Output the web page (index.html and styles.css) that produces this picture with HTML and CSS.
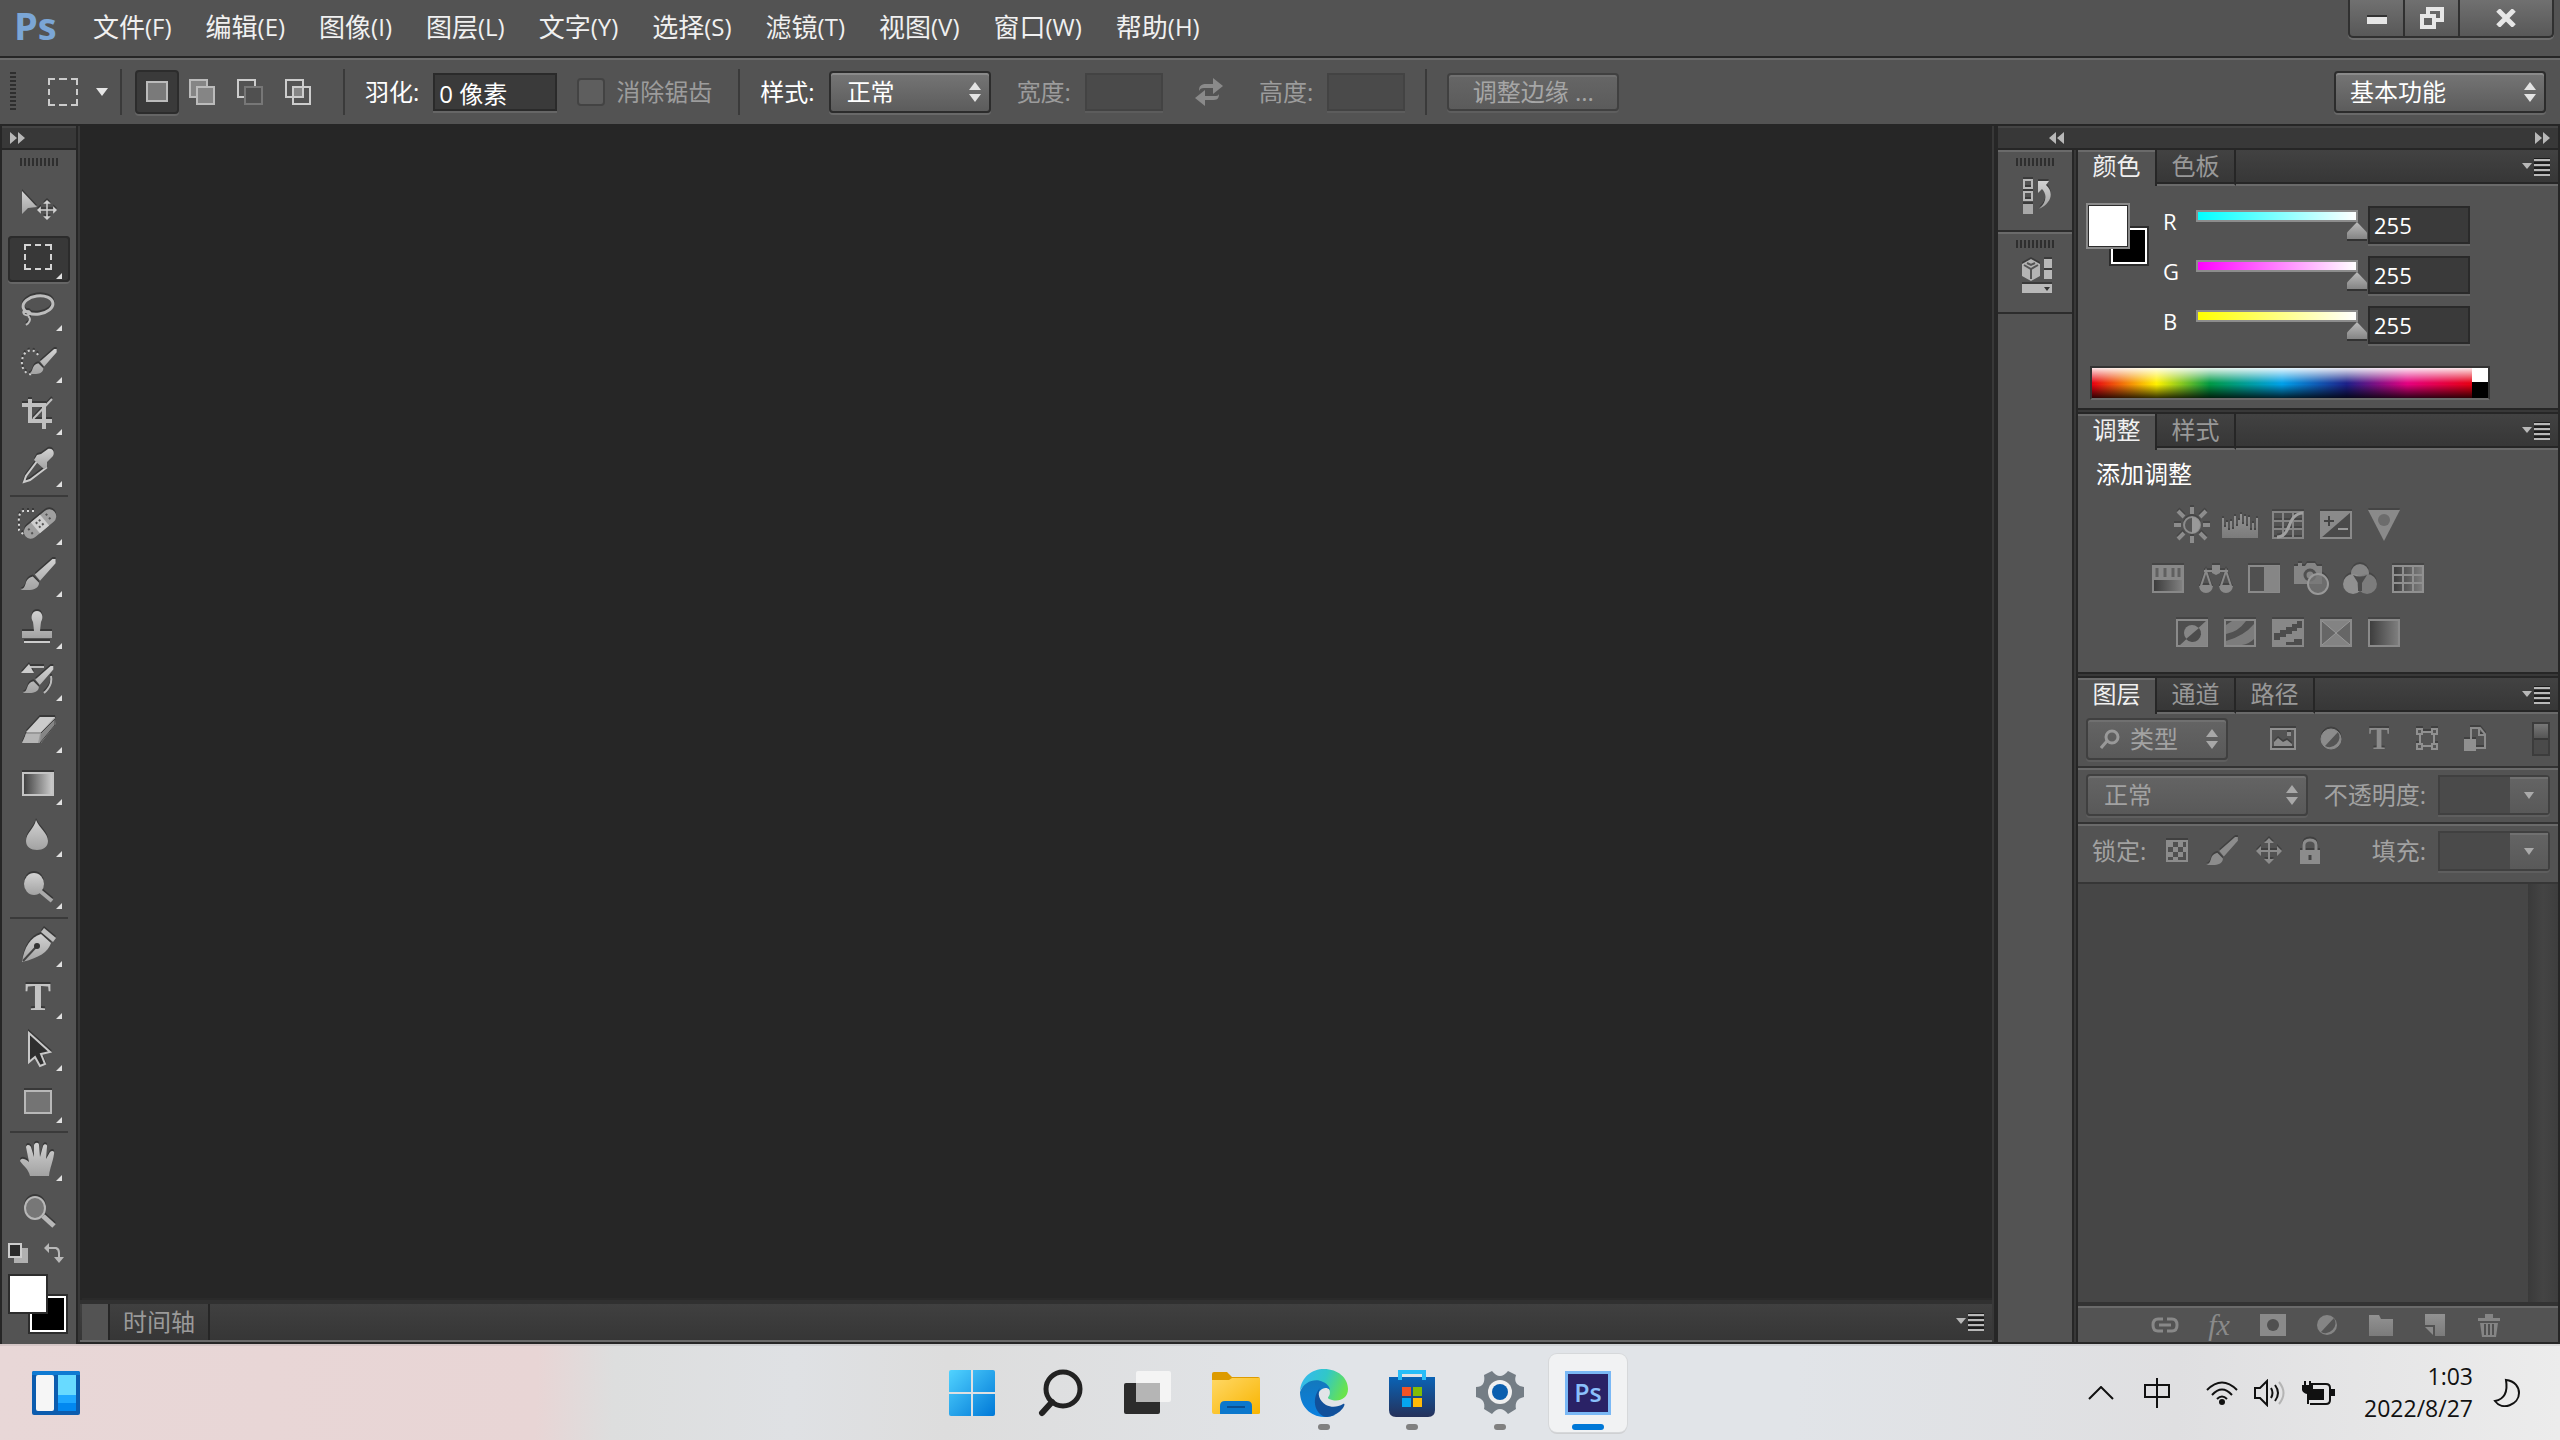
FILE: index.html
```html
<!DOCTYPE html>
<html lang="zh-CN">
<head>
    <meta charset="utf-8">
    <title>Photoshop</title>
    <link rel="stylesheet" href="styles.css">
</head>
<body>
<svg class="defs" width="0" height="0">
    <defs>
        <linearGradient id="metal" x1="0" y1="0" x2="0" y2="1"><stop offset="0" stop-color="#d2d2d2"/><stop offset="1" stop-color="#a2a2a2"/></linearGradient>
        <linearGradient id="dim" x1="0" y1="0" x2="0" y2="1"><stop offset="0" stop-color="#929292"/><stop offset="1" stop-color="#7b7b7b"/></linearGradient>
        <linearGradient id="ramp"><stop offset="0" stop-color="#3c3c3c"/><stop offset="1" stop-color="#cfcfcf"/></linearGradient>
        <linearGradient id="dimramp"><stop offset="0" stop-color="#3c3c3c"/><stop offset="1" stop-color="#808080"/></linearGradient>
        <symbol id="updown" viewBox="0 0 12 20"><path d="M6 0l6 8H0zM6 20l6-8H0z" fill="currentColor"/></symbol>
        <symbol id="panelmenu" viewBox="0 0 28 18"><path d="M0 5h10l-5 6z" fill="#b8b8b8"/><path d="M12 2h16M12 7h16M12 12h16M12 17h16" stroke="#b8b8b8" stroke-width="2"/><path d="M12 0h16M12 5h16M12 10h16M12 15h16" stroke="#1c1c1c" stroke-width="2"/></symbol>
        <symbol id="brushshape" viewBox="0 0 34 30"><path d="M34 0h-3L14 15l5 6L34 4zM12 17l6 6c0 6-7 8-18 7 3-1 4-3 5-6 1-4 3-6 7-7z"/></symbol>
        <symbol id="crossarrows" viewBox="0 0 26 26"><path d="M13 0l5 5h-4v7h7V8l5 5-5 5v-4h-7v7h4l-5 5-5-5h4v-7H5v4l-5-5 5-5v4h7V5H8z"/></symbol>
    </defs>
</svg>

<header class="menubar">
    <span class="logo">Ps</span>
    <nav class="menus">
        <button>文件<small>(F)</small></button>
        <button>编辑<small>(E)</small></button>
        <button>图像<small>(I)</small></button>
        <button>图层<small>(L)</small></button>
        <button>文字<small>(Y)</small></button>
        <button>选择<small>(S)</small></button>
        <button>滤镜<small>(T)</small></button>
        <button>视图<small>(V)</small></button>
        <button>窗口<small>(W)</small></button>
        <button>帮助<small>(H)</small></button>
    </nav>
    <div class="window-buttons">
        <button aria-label="最小化"><svg width="20" height="20"><path d="M0 9h20v7H0z" fill="#e6e6e6"/><path d="M0 8h20" stroke="#333" stroke-width="2"/></svg></button>
        <button aria-label="还原"><svg width="24" height="22" fill="none" stroke="#e6e6e6" stroke-width="4"><path d="M8 8V2h14v11h-6"/><path d="M2 9h12v11H2z"/></svg></button>
        <button class="close" aria-label="关闭"><svg width="20" height="18" fill="none" stroke="#e6e6e6" stroke-width="5"><path d="M2 1l16 16M18 1L2 17"/></svg></button>
    </div>
</header>

<div class="options">
    <i class="grip-v"></i>
    <button class="preset" aria-label="矩形选框工具">
        <svg width="30" height="28" fill="none" stroke="#ccc" stroke-width="2"><path d="M1 7V1h6M23 1h6v6M29 21v6h-6M7 27H1v-6M11 1h8M11 27h8M1 11v6M29 11v6"/></svg>
        <svg width="12" height="8"><path d="M0 0h12L6 8z" fill="#e6e6e6"/></svg>
    </button>
    <i class="sep tight"></i>
    <div class="modes">
        <button class="on" aria-label="新选区"><svg width="22" height="24"><rect x="1" y="2" width="20" height="19" fill="#7a7a7a" stroke="#bbb" stroke-width="2"/></svg></button>
        <button aria-label="添加到选区"><svg width="28" height="28" fill="#858585" stroke="#bbb" stroke-width="2"><path d="M1 2h17v17H1z"/><path d="M8 9h17v17H8z"/></svg></button>
        <button aria-label="从选区减去"><svg width="28" height="28" fill="none" stroke-width="2"><path d="M8 19H1V2h17v6" stroke="#ccc"/><path d="M8 9h17v17H8z" fill="#505050" stroke="#777"/></svg></button>
        <button aria-label="与选区交叉"><svg width="28" height="28" fill="none" stroke="#ccc" stroke-width="2"><path d="M1 2h17v17H1z"/><path d="M8 9h17v17H8z"/><path d="M9 10h8v8H9z" fill="#858585" stroke="none"/></svg></button>
    </div>
    <i class="sep"></i>
    <label class="field">羽化: <input class="box feather" type="text" value="0 像素"></label>
    <label class="check off"><input type="checkbox" disabled>消除锯齿</label>
    <i class="sep"></i>
    <label class="field">样式:
        <span class="select style-select"><select><option>正常</option></select><svg width="12" height="20"><use href="#updown"/></svg></span>
    </label>
    <label class="field off width-field">宽度: <input class="box" type="text" disabled></label>
    <button class="swap" aria-label="高度和宽度互换"><svg width="28" height="28" fill="#8a8a8a"><path d="M4 13c0-5 2-7 7-7h7V0l10 8-10 8v-6H9c-3 0-4 1-5 3zM24 16c0 5-2 6-7 6h-7v6L0 20l10-8v6h9c3 0 4 0 5-2z"/></svg></button>
    <label class="field off">高度: <input class="box" type="text" disabled></label>
    <i class="sep"></i>
    <button class="refine" disabled>调整边缘 ...</button>
    <span class="select workspace-select"><select aria-label="工作区"><option>基本功能</option></select><svg width="12" height="20"><use href="#updown"/></svg></span>
</div>

<main class="workspace">
    <aside class="toolbox">
        <button class="collapse" aria-label="展开"><svg width="16" height="12" fill="#b8b8b8"><path d="M0 0l7 6-7 6zM8 0l7 6-7 6z"/></svg></button>
        <i class="grip-h"></i>
        <div class="tools">
            <button class="solo" aria-label="移动"><svg viewBox="0 0 62 46"><path d="M14 7v23l6-6 9-1z" fill="url(#metal)"/><use href="#crossarrows" x="29" y="16" width="20" height="20" fill="#d0d0d0"/></svg></button>
            <button class="on" aria-label="矩形选框"><svg viewBox="0 0 62 46" fill="none" stroke="#d4d4d4" stroke-width="2"><path d="M17 14V9h6M37 9h6v5M43 28v5h-6M23 33h-6v-5M27 9h6M27 33h6M17 18v6M43 18v6"/></svg></button>
            <button aria-label="套索"><svg viewBox="0 0 62 46" fill="none" stroke="#bdbdbd" stroke-width="3"><ellipse cx="30" cy="17" rx="15" ry="9" transform="rotate(-8 30 17)"/><path d="M16 22c-3 5 5 7 6 3 0-3-5-2-5 0M20 28c4 3 1 7-2 9" stroke-width="2"/></svg></button>
            <button aria-label="快速选择"><svg viewBox="0 0 62 46"><path d="M30 15a9 12 0 1 0-5 19" fill="none" stroke="#d0d0d0" stroke-width="2" stroke-dasharray="2 3"/><use href="#brushshape" x="19" y="9" width="31" height="25" fill="url(#metal)"/></svg></button>
            <button aria-label="裁剪"><svg viewBox="0 0 62 46" fill="none" stroke="#c0c0c0" stroke-width="4"><path d="M14 13h22v24M22 7v22h22"/><path d="M25 27L44 7" stroke-width="2"/></svg></button>
            <button aria-label="吸管"><svg viewBox="0 0 62 46"><path d="M30 16l8 8-16 12-6 2 2-6z" fill="none" stroke="#ccc" stroke-width="2"/><path d="M29 11l4-1 7-5c5-1 7 3 5 7l-6 6v5l-3 2-10-9z" fill="url(#metal)"/></svg></button>
            <hr>
            <button aria-label="污点修复画笔"><svg viewBox="0 0 62 46"><path d="M26 9H15q-5 3-4 10v9l4 4" fill="none" stroke="#d8d8d8" stroke-width="2" stroke-dasharray="2 3"/><g transform="rotate(-40 32 22)"><rect x="13" y="15" width="38" height="14" rx="7" fill="#a0a0a0"/><path d="M26 15h12v14H26z" fill="#cfcfcf"/><path d="M29 19h6M29 24h6M19 19h3M19 24h3M42 19h3M42 24h3" stroke="#555" stroke-width="2" stroke-dasharray="2 2"/></g></svg></button>
            <button aria-label="画笔"><svg viewBox="0 0 62 46"><use href="#brushshape" x="12" y="5" width="36" height="31" fill="url(#metal)"/></svg></button>
            <button aria-label="仿制图章"><svg viewBox="0 0 62 46"><path d="M25 16c-3-5-1-11 4-11s7 6 4 11l-1 9h12v7H14v-7h12z" fill="url(#metal)"/><path d="M16 36h26" stroke="#ccc" stroke-width="2"/></svg></button>
            <button aria-label="历史记录画笔"><svg viewBox="0 0 62 46"><path d="M22 9h14M43 18q2 9-7 17" fill="none" stroke="#bbb" stroke-width="2" stroke-dasharray="14 0"/><path d="M13 15l8-9 5 9z" fill="#ccc"/><use href="#brushshape" x="14" y="8" width="32" height="27" fill="url(#metal)"/></svg></button>
            <button aria-label="橡皮擦"><svg viewBox="0 0 62 46"><path d="M15 33l3-10L32 7h15l1 7-15 19z" fill="#999"/><path d="M32 7h15L33 22H18z" fill="#cbcbcb"/><path d="M18 24h14l-2 9H14z" fill="#b5b5b5"/><path d="M33 23l14-14v6L32 33" fill="#858585" stroke="#444"/></svg></button>
            <button aria-label="渐变"><svg viewBox="0 0 62 46"><rect x="15" y="11" width="30" height="22" fill="url(#ramp)" stroke="#c4c4c4" stroke-width="2"/></svg></button>
            <button aria-label="模糊"><svg viewBox="0 0 62 46"><path d="M28 6c3 8 12 13 12 21 0 6-5 9-11 9s-11-3-11-9c0-8 8-12 10-21z" fill="url(#metal)"/></svg></button>
            <button aria-label="减淡"><svg viewBox="0 0 62 46"><ellipse cx="26" cy="18" rx="10" ry="11" fill="url(#metal)"/><path d="M32 25l12 10" stroke="#aaa" stroke-width="4"/></svg></button>
            <hr>
            <button aria-label="钢笔"><svg viewBox="0 0 62 46"><path d="M33 10l10 9c-3 9-12 15-29 19 2-15 9-25 19-28z" fill="url(#metal)"/><path d="M36 4l12 10-3 4L33 8z" fill="#bdbdbd"/><path d="M15 37l13-14" stroke="#444" stroke-width="2"/><circle cx="29" cy="22" r="3" fill="#333"/></svg></button>
            <button aria-label="横排文字"><svg viewBox="0 0 62 46"><text x="30" y="34" class="glyph" fill="#c4c4c4">T</text></svg></button>
            <button aria-label="路径选择"><svg viewBox="0 0 62 46"><path d="M21 5v29l6-5 5 9 5-2-4-10 9-2z" fill="#2e2e2e" stroke="#c8c8c8" stroke-width="2"/></svg></button>
            <button aria-label="矩形"><svg viewBox="0 0 62 46"><rect x="17" y="11" width="26" height="22" fill="#747474" stroke="#b8b8b8" stroke-width="2"/></svg></button>
            <hr>
            <button aria-label="抓手"><svg viewBox="0 0 62 46"><path d="M22 38c-2-8-6-9-10-15 1-3 4-3 9 1L18 9c1-3 4-2 5 0l3 10V7c1-3 5-3 5 0l1 12 3-11c1-3 5-2 4 1l-1 12 4-7c2-2 5-1 4 2-1 8-4 13-5 22z" fill="url(#metal)"/></svg></button>
            <button class="solo" aria-label="缩放"><svg viewBox="0 0 62 46"><ellipse cx="27" cy="18" rx="10" ry="11" fill="#777" stroke="#b8b8b8" stroke-width="2"/><path d="M35 26l11 10" stroke="#b8b8b8" stroke-width="5"/></svg></button>
        </div>
        <div class="mini">
            <button aria-label="默认颜色"><svg width="20" height="22"><path d="M6 6h14v15H6z" fill="#b0b0b0"/><path d="M1 2h12v13H1z" fill="#2b2b2b" stroke="#ccc" stroke-width="2"/></svg></button>
            <button aria-label="切换颜色"><svg width="20" height="22" fill="none" stroke="#b8b8b8" stroke-width="2"><path d="M4 6h8q3 1 3 5v7"/><path d="M5 1v10L0 6zM10 15h10l-5 6z" fill="#b8b8b8" stroke="none"/></svg></button>
        </div>
        <div class="swatches"><b class="bg"></b><b class="fg"></b></div>
    </aside>

    <section class="center">
        <div class="canvas"></div>
        <div class="timeline">
            <i class="stub"></i>
            <button class="tl-tab">时间轴</button>
            <button class="menu-btn" aria-label="面板菜单"><svg width="28" height="18"><use href="#panelmenu"/></svg></button>
        </div>
    </section>

    <aside class="dock">
        <div class="dock-head">
            <button aria-label="展开"><svg width="16" height="12" fill="#b8b8b8"><path d="M7 0v12L0 6zM15 0v12L8 6z"/></svg></button>
            <button aria-label="折叠"><svg width="16" height="12" fill="#b8b8b8"><path d="M0 0l7 6-7 6zM8 0l7 6-7 6z"/></svg></button>
        </div>
        <div class="dock-body">
            <div class="strip">
                <div class="strip-cell"><i class="grip-h"></i><button aria-label="历史记录"><svg width="30" height="36"><path d="M2 2h8v8H2zM2 14h8v8H2z" fill="none" stroke="#b8b8b8" stroke-width="2"/><path d="M1 26h10v10H1z" fill="#a8a8a8"/><path d="M16 3h11l-3 4c8 7 6 18-7 24 8-7 8-15 3-20l-4 4z" fill="url(#metal)"/></svg></button></div>
                <div class="strip-cell"><i class="grip-h"></i><button aria-label="属性"><svg width="30" height="36" viewBox="0 3 30 36" overflow="visible"><path d="M9 2l9 5v12l-9 5-9-5V7z" fill="#b4b4b4"/><path d="M2 8l7 4 7-4M9 12v10M5 6l4 2 4-2" fill="none" stroke="#555" stroke-width="2"/><path d="M22 2h8v9h-8zM22 13h8v9h-8zM0 27h30v9H0z" fill="#b8b8b8"/><path d="M22 30h6l-3 4z" fill="#333"/></svg></button></div>
            </div>
            <div class="panels">
                <section class="panel">
                    <div class="tabs"><button class="on">颜色</button><button>色板</button><span class="fill"><svg width="28" height="18"><use href="#panelmenu"/></svg></span></div>
                    <div class="color-body">
                        <div class="color-swatches"><b class="bg"></b><b class="fg"></b></div>
                        <div class="channels">
                            <label for="r">R</label><input class="slider cyan" type="range" min="0" max="255" value="255" aria-label="R"><input class="box" id="r" type="text" value="255">
                            <label for="g">G</label><input class="slider magenta" type="range" min="0" max="255" value="255" aria-label="G"><input class="box" id="g" type="text" value="255">
                            <label for="b">B</label><input class="slider yellow" type="range" min="0" max="255" value="255" aria-label="B"><input class="box" id="b" type="text" value="255">
                        </div>
                    </div>
                    <div class="spectrum"><i></i><b></b></div>
                </section>

                <section class="panel">
                    <div class="tabs"><button class="on">调整</button><button>样式</button><span class="fill"><svg width="28" height="18"><use href="#panelmenu"/></svg></span></div>
                    <h3 class="hint">添加调整</h3>
                    <div class="adjust">
                        <div>
                            <button aria-label="亮度/对比度"><svg width="36" height="36"><path d="M18 0v7M18 29v7M0 18h7M29 18h7M4 4l6 6M26 26l6 6M32 4l-6 6M10 26l-6 6" stroke="#8c8c8c" stroke-width="4"/><circle cx="18" cy="18" r="8" fill="#555" stroke="#8c8c8c" stroke-width="2"/><path d="M18 10a8 8 0 0 1 0 16z" fill="#999"/></svg></button>
                            <button aria-label="色阶"><svg width="36" height="26"><path d="M0 26V6h2v9h2v-5h2v8h2V9h2v8h2V4h2v10h2V8h2V2h2v10h2V4h2v10h2V5h2v13h2v-7h2v7h2V6h2v20z" fill="url(#dim)"/></svg></button>
                            <button aria-label="曲线"><svg width="32" height="28" fill="none" stroke="#858585" stroke-width="2"><path d="M1 1h30v26H1zM11 1v26M21 1v26M1 10h30M1 18h30"/><path d="M5 26C20 26 14 3 31 2" stroke="#a0a0a0" stroke-width="3"/></svg></button>
                            <button aria-label="曝光度"><svg width="32" height="28"><path d="M1 1h30v26H1z" fill="#4a4a4a" stroke="#8a8a8a" stroke-width="2"/><path d="M1 27V1h30z" fill="#8a8a8a"/><path d="M4 10h10M9 5v10" stroke="#444" stroke-width="2"/><path d="M18 18h10" stroke="#999" stroke-width="2"/></svg></button>
                            <button aria-label="自然饱和度"><svg width="32" height="32"><path d="M0 1h32L16 32z" fill="#8a8a8a"/><circle cx="16" cy="11" r="6" fill="#6c6c6c"/></svg></button>
                        </div>
                        <div>
                            <button aria-label="色相/饱和度"><svg width="32" height="28"><path d="M0 0h32v28H0z" fill="#888"/><path d="M5 3v9M13 3v9M21 3v9M27 3v9" stroke="#606060" stroke-width="3"/><path d="M2 15h28v11H2z" fill="url(#dimramp)"/></svg></button>
                            <button aria-label="色彩平衡"><svg width="34" height="30" fill="none" stroke="#8a8a8a" stroke-width="2"><path d="M5 7h24M7 7L2 22h10zM27 7l-5 15h10z"/><path d="M13 1h8v8l-4 2-4-2zM0 22h14q-1 7-7 7t-7-7zM20 22h14q-1 7-7 7t-7-7z" fill="#8a8a8a" stroke="none"/></svg></button>
                            <button aria-label="黑白"><svg width="32" height="28"><path d="M1 1h30v26H1z" fill="#505050" stroke="#8a8a8a" stroke-width="2"/><path d="M16 1h15v26H16z" fill="#868686"/></svg></button>
                            <button aria-label="照片滤镜"><svg width="36" height="32"><path d="M0 3h4V0h4v3h3l2-3h8l2 3h5v18H0z" fill="#858585"/><circle cx="16" cy="12" r="5" fill="none" stroke="#505050" stroke-width="3"/><circle cx="24" cy="21" r="10" fill="#777" fill-opacity=".8" stroke="#999" stroke-width="2"/></svg></button>
                            <button aria-label="通道混合器"><svg width="34" height="32"><circle cx="17" cy="10" r="9" fill="#858585"/><circle cx="10" cy="21" r="10" fill="#909090"/><circle cx="24" cy="21" r="10" fill="#7c7c7c"/><path d="M10 12q7 3 14 0l-5 8v8h-4v-8z" fill="#4c4c4c"/></svg></button>
                            <button aria-label="颜色查找"><svg width="32" height="28"><path d="M1 1h30v26H1z" fill="url(#dimramp)"/><path d="M1 1h30v26H1zM11 1v26M21 1v26M1 10h30M1 18h30" fill="none" stroke="#909090" stroke-width="2"/></svg></button>
                        </div>
                        <div>
                            <button aria-label="反相"><svg width="32" height="28"><path d="M1 1h30v26H1z" fill="#4e4e4e" stroke="#8a8a8a" stroke-width="2"/><path d="M31 1v26H3z" fill="#868686"/><circle cx="16" cy="14" r="8" fill="#868686"/><path d="M23 9a8 8 0 0 1-13 11z" fill="#4c4c4c"/></svg></button>
                            <button aria-label="色调分离"><svg width="32" height="28"><path d="M1 1h30v26H1z" fill="#7c7c7c" stroke="#8a8a8a" stroke-width="2"/><path d="M2 15Q14 13 22 2h8v3Q20 17 2 22zM18 26q7-1 12-6v6zM2 2h6L2 6z" fill="#515151"/></svg></button>
                            <button aria-label="阈值"><svg width="32" height="28"><path d="M0 0h32v28H0z" fill="#888"/><path d="M2 14h6v-3h6V8h6V5h5V2h5v7h-5v3h-5v3h-6v3H8v3H2zM14 26v-3h8v-3h8v6z" fill="#4c4c4c"/></svg></button>
                            <button aria-label="可选颜色"><svg width="32" height="28"><path d="M1 1h30v26H1z" fill="#666" stroke="#8a8a8a" stroke-width="2"/><path d="M2 2h28L16 14zM2 26h28L16 14z" fill="#838383"/><path d="M2 2l28 24M30 2L2 26" stroke="#999"/></svg></button>
                            <button aria-label="渐变映射"><svg width="32" height="28"><path d="M1 1h30v26H1z" fill="url(#dimramp)" stroke="#8a8a8a" stroke-width="2"/></svg></button>
                        </div>
                    </div>
                </section>

                <section class="panel layers">
                    <div class="tabs"><button class="on">图层</button><button>通道</button><button>路径</button><span class="fill"><svg width="28" height="18"><use href="#panelmenu"/></svg></span></div>
                    <div class="row">
                        <span class="select dimmed kind"><svg class="lens" width="20" height="20" fill="none" stroke="#999" stroke-width="3"><circle cx="12" cy="8" r="6"/><path d="M7 12l-6 7"/></svg><select aria-label="类型" disabled><option>类型</option></select><svg width="12" height="20"><use href="#updown"/></svg></span>
                        <div class="filters">
                            <button aria-label="像素"><svg width="26" height="24"><path d="M1 2h24v20H1z" fill="none" stroke="#909090" stroke-width="2"/><path d="M4 19v-4l4-4 5 4 4-2 5 4v2zM17 5h4v4h-4z" fill="#8c8c8c"/></svg></button>
                            <button aria-label="调整"><svg width="22" height="24"><circle cx="11" cy="12" r="10" fill="#8c8c8c" stroke="#8c8c8c"/><path d="M18 5a10 10 0 0 1-13 14z" fill="#555"/></svg></button>
                            <button aria-label="文字"><svg width="24" height="36"><text x="12" y="28" class="glyph small" fill="#8c8c8c">T</text></svg></button>
                            <button aria-label="形状"><svg width="22" height="24" fill="#555" stroke="#909090" stroke-width="2"><path d="M4 5h14v14H4z"/><path d="M1 2h5v5H1zM16 2h5v5h-5zM1 17h5v5H1zM16 17h5v5h-5z"/></svg></button>
                            <button aria-label="智能对象"><svg width="24" height="26"><path d="M8 13V2h9l5 6v14H10M16 2v7h6" fill="none" stroke="#8c8c8c" stroke-width="2"/><path d="M1 13h12v12H1z" fill="#909090"/></svg></button>
                        </div>
                        <button class="toggle" aria-label="滤镜开关"></button>
                    </div>
                    <div class="row">
                        <span class="select dimmed blend"><select aria-label="混合模式" disabled><option>正常</option></select><svg width="12" height="20"><use href="#updown"/></svg></span>
                        <label class="amount">不透明度: <span class="combo"><input type="text" disabled><button disabled aria-label="不透明度"><svg width="10" height="7"><path d="M0 0h10L5 7z" fill="#aaa"/></svg></button></span></label>
                    </div>
                    <div class="row last">
                        <span class="lock-label">锁定:</span>
                        <div class="locks">
                            <button aria-label="锁定透明像素"><svg width="22" height="24"><path d="M1 2h20v20H1z" fill="#505050" stroke="#8c8c8c" stroke-width="2"/><path d="M2 3h5v5H2zM12 3h5v5h-5zM7 8h5v5H7zM17 8h4v5h-4zM2 13h5v5H2zM12 13h5v5h-5zM7 18h5v4H7z" fill="#8c8c8c"/></svg></button>
                            <button aria-label="锁定图像像素"><svg width="32" height="28" fill="#8c8c8c"><use href="#brushshape"/></svg></button>
                            <button aria-label="锁定位置"><svg width="26" height="26" fill="#8c8c8c"><use href="#crossarrows"/></svg></button>
                            <button aria-label="锁定全部"><svg width="20" height="26"><path d="M4 13V7q0-5 6-5t6 5v6" fill="none" stroke="#8c8c8c" stroke-width="3"/><path d="M0 12h20v14H0z" fill="#8c8c8c"/><path d="M10 17v5" stroke="#444" stroke-width="3"/></svg></button>
                        </div>
                        <label class="amount">填充: <span class="combo"><input type="text" disabled><button disabled aria-label="填充"><svg width="10" height="7"><path d="M0 0h10L5 7z" fill="#aaa"/></svg></button></span></label>
                    </div>
                    <div class="layer-list"></div>
                    <div class="layer-actions">
                        <button aria-label="链接图层"><svg width="28" height="18" fill="none" stroke="#888" stroke-width="3"><path d="M12 3H7Q2 3 2 9t5 6h5M16 3h5q5 0 5 6t-5 6h-5M8 9h12"/></svg></button>
                        <button aria-label="图层样式"><em>fx</em></button>
                        <button aria-label="添加蒙版"><svg width="26" height="22"><path d="M0 0h26v22H0z" fill="#8a8a8a"/><circle cx="13" cy="11" r="6" fill="#505050"/></svg></button>
                        <button aria-label="新建调整图层"><svg width="22" height="24"><circle cx="11" cy="12" r="10" fill="#858585"/><path d="M18 5a10 10 0 0 1-13 14z" fill="#555"/></svg></button>
                        <button aria-label="新建组"><svg width="24" height="22"><path d="M0 22V1h10l2 4h12v17z" fill="url(#dim)"/></svg></button>
                        <button aria-label="新建图层"><svg width="22" height="22"><path d="M1 0h20v22H11V11H1z" fill="url(#dim)"/><path d="M1 13h8v8z" fill="#8a8a8a"/></svg></button>
                        <button aria-label="删除图层"><svg width="22" height="24"><path d="M0 5h22v3H0zM7 1h8v4H7zM2 10h18l-2 14H4z" fill="#858585"/><path d="M7 11v11M11 11v11M15 11v11" stroke="#505050" stroke-width="2"/></svg></button>
                    </div>
                </section>
            </div>
        </div>
    </aside>
</main>

<footer class="taskbar">
    <button class="widgets" aria-label="小组件"><svg width="48" height="44"><rect width="48" height="44" rx="2" fill="#0c5cae"/><path d="M0 2q0-2 2-2h44q2 0 2 2v2H0z" fill="#0f7ad2"/><rect x="4" y="4" width="18" height="36" rx="2" fill="#f6f6f6"/><path d="M26 4h18v20H26z" fill="#68daff"/><path d="M26 24h18v8H26z" fill="#1fa8ff"/><path d="M26 32h18v8H26z" fill="#0288f0"/></svg></button>
    <div class="apps">
        <button aria-label="开始"><svg width="48" height="48"><defs><linearGradient id="win" x1="0" y1="0" x2="1" y2="1"><stop offset="0" stop-color="#51d3ff"/><stop offset="1" stop-color="#0078d7"/></linearGradient></defs><rect x="1" y="1" width="46" height="46" rx="2" fill="url(#win)"/><path d="M24 1v46M1 24h46" stroke="#dfe0e2" stroke-width="2"/></svg></button>
        <button aria-label="搜索"><svg width="48" height="48" fill="none" stroke="#222"><circle cx="27" cy="20" r="17" stroke-width="5"/><path d="M16 33L6 44" stroke-width="6" stroke-linecap="round"/></svg></button>
        <button aria-label="任务视图"><svg width="48" height="48"><rect x="0" y="14" width="36" height="31" rx="2" fill="#2c2c2c"/><rect x="12" y="2" width="35" height="31" rx="2" fill="#f4f4f4"/><path d="M12 14h24v19H12z" fill="#b5b5b5"/></svg></button>
        <button aria-label="文件资源管理器"><svg width="48" height="48"><defs><linearGradient id="fold" x1="0" y1="0" x2="1" y2="1"><stop offset="0" stop-color="#ffd866"/><stop offset="1" stop-color="#f8b400"/></linearGradient></defs><path d="M0 5q0-2 2-2h13l5 5h26q2 0 2 2v4H0z" fill="#dd9b00"/><path d="M0 11h17l3-2h28v35q0 1-2 1H2q-2 0-2-2z" fill="url(#fold)"/><path d="M8 45V37q0-5 5-5h22q5 0 5 5v8z" fill="#0b77cc"/><path d="M15 38h18" stroke="#0a4f91" stroke-width="2"/></svg></button>
        <button class="open" aria-label="Edge"><svg width="48" height="48" viewBox="0 0 48 48"><defs><linearGradient id="e1" x1="0" y1=".2" x2="1" y2=".5"><stop offset="0" stop-color="#35b8f1"/><stop offset=".5" stop-color="#31c7c8"/><stop offset="1" stop-color="#69e34c"/></linearGradient><linearGradient id="e2" x1="0" y1="0" x2="0" y2="1"><stop offset="0" stop-color="#1378bd"/><stop offset="1" stop-color="#0a80e0"/></linearGradient></defs><path d="M0 22C1 8 12 0 24 0c14 0 24 9 24 20 0 9-8 13-16 11-4-1-5-2-3-4 2-3 1-9-5-11C14 12 3 15 0 22z" fill="url(#e1)"/><path d="M0 23C4 12 16 9 23 13c5 2 7 6 7 8-5-5-13 0-12 8 1 8 9 12 17 17-18 7-35-5-35-23z" fill="url(#e2)"/><path d="M20 19c-3 5-1 13 6 17 6 3 12 2 17-1 2-1 2 1 0 4-4 5-9 8-16 9-11-1-17-17-7-29z" fill="#11509b"/></svg></button>
        <button class="open" aria-label="Microsoft Store"><svg width="48" height="50"><defs><linearGradient id="bag" x1="0" y1="0" x2="0" y2="1"><stop offset="0" stop-color="#0a63b6"/><stop offset="1" stop-color="#25315a"/></linearGradient></defs><path d="M1 9h46v33q0 7-7 7H8q-7 0-7-7z" fill="url(#bag)"/><path d="M12 12V4h24v8" fill="none" stroke="#27bdf8" stroke-width="4"/><path d="M14 19h9v9h-9z" fill="#f35325"/><path d="M25 19h9v9h-9z" fill="#81bc06"/><path d="M14 30h9v9h-9z" fill="#05a6f0"/><path d="M25 30h9v9h-9z" fill="#ffba08"/></svg></button>
        <button class="open" aria-label="设置"><svg width="48" height="48"><path d="M16 2q4 5 8 5t8-5l8 4q-2 6 1 9t7 3v10q-5 1-7 4t-1 8l-8 5q-4-5-8-5t-8 5l-8-5q1-5-1-8t-7-4V18q5 0 7-3t1-9z" fill="#747d85"/><circle cx="24" cy="23" r="12" fill="#f0f0f0"/><circle cx="24" cy="23" r="8" fill="#0a5eae"/></svg></button>
        <button class="active" aria-label="Photoshop"><span class="ps">Ps</span></button>
    </div>
    <div class="tray">
        <button aria-label="显示隐藏的图标"><svg width="28" height="14" fill="none" stroke="#111" stroke-width="2"><path d="M2 13L14 1l12 12"/></svg></button>
        <button class="ime" aria-label="输入法"><svg width="28" height="30" fill="none" stroke="#111" stroke-width="2"><path d="M2 7h24v12H2zM14 0v30"/></svg></button>
        <button class="status" aria-label="网络和音量">
            <svg width="32" height="24" fill="none" stroke="#111" stroke-width="2"><path d="M1 9Q16-6 31 9M6 14Q16 3 26 14M11 18q5-5 10 0"/><circle cx="16" cy="21" r="3" fill="#111" stroke="none"/></svg>
            <svg width="34" height="28" fill="none" stroke="#111" stroke-width="2"><path d="M2 9h5l7-7v24l-7-7H2zM18 9q3 5 0 10M22 6q6 8 0 16"/><path d="M26 3q9 11 0 22" stroke="#b5b5b5"/></svg>
            <svg width="34" height="26"><path d="M8 4h16q4 0 4 4v12q0 4-4 4H8" fill="none" stroke="#111" stroke-width="2"/><path d="M29 9h4v7h-4zM9 9h13v11H6v-7zM2 1h2v4h3V1h2v4h2v5q-1 3-4 4v10H5V14q-4-1-5-4V5h2z" fill="#111"/></svg>
        </button>
        <button class="clock"><time>1:03</time><time>2022/8/27</time></button>
        <button aria-label="专注助手"><svg width="28" height="30" fill="none" stroke="#111" stroke-width="2"><path d="M13 2c9 1 13 7 13 13 0 12-17 18-24 8 10-2 13-9 11-21z"/></svg></button>
    </div>
</footer>
</body>
</html>
```

FILE: styles.css
```css
*{
    box-sizing: border-box;
}
body{
    margin:0;
    height:100vh;
    display:flex;
    flex-direction: column;
    background:#262626;
    color:#fff;
    font-family: "Open Sans", "Noto Sans CJK SC", sans-serif;
    font-size:24px;
    line-height:32px;
    overflow:hidden;
}
button, input, select{
    font: inherit;
    color:inherit;
    margin:0;
}
button{
    background:none;
    border:none;
    padding:0;
    display:flex;
    align-items: center;
    justify-content: center;
}
svg{
    display:block;
}
.defs{
    position:absolute;
}

/* menu bar */
.menubar{
    height:58px;
    flex:none;
    display:flex;
    background:#535353;
    border-bottom:2px solid #262626;
}
.logo{
    width:78px;
    padding-left:14px;
    color:#7ba6d6;
    font-size:38px;
    font-weight:700;
    line-height:50px;
}
.menus{
    display:flex;
    gap:34px;
    padding-left:15px;
    height:53px;
}
.menus button{
    font-size:26px;
    color:#f0f0f0;
}
.menus small{
    font-size:24px;
}
.window-buttons{
    display:flex;
    margin-left:auto;
    margin-right:6px;
    height:38px;
    border:2px solid #303030;
    border-top:none;
    border-radius:0 0 5px 5px;
    box-shadow:0 2px 0 #6c6c6c;
    background:linear-gradient(#707070,#585858);
}
.window-buttons button{
    width:55px;
    border-right:2px solid #303030;
}
.window-buttons .close{
    width:92px;
    border:none;
}

/* options bar */
.options{
    height:66px;
    flex:none;
    display:flex;
    align-items: center;
    padding:0 14px 0 10px;
    background:#535353;
    border-top:2px solid #6a6a6a;
}
.grip-v{
    width:6px;
    height:40px;
    background:repeating-linear-gradient(#2e2e2e 0 2px,#535353 2px 4px);
}
.preset{
    gap:18px;
    margin-left:32px;
}
.sep{
    width:2px;
    height:46px;
    margin:0 20px;
    background:#3a3a3a;
}
.sep.tight{
    margin:0 13px 0 12px;
}
.modes{
    display:flex;
}
.modes button{
    width:48px;
    height:44px;
}
.modes .on{
    width:44px;
    background:#3a3a3a;
    border:2px solid #2c2c2c;
    border-radius:4px;
    box-shadow:0 2px 0 #656565;
}
.field{
    display:flex;
    align-items: center;
    gap:14px;
}
.off{
    color:#9c9c9c;
}
.box{
    width:78px;
    height:38px;
    padding:0 4px;
    background:#3a3a3a;
    border:2px solid #2a2a2a;
    border-radius:0;
    box-shadow:0 2px 0 #666;
}
.box:disabled{
    background:#4a4a4a;
    border-color:#434343;
    box-shadow:0 2px 0 #5c5c5c;
}
.feather{
    width:124px;
}
.check{
    display:flex;
    align-items: center;
    gap:11px;
    margin:0 6px 0 20px;
}
.check input{
    appearance:none;
    width:28px;
    height:28px;
    background:#5e5e5e;
    border:2px solid #434343;
    border-radius:4px;
}
.select{
    display:grid;
    align-items: center;
    height:42px;
    background:linear-gradient(#757575,#5c5c5c);
    border:2px solid #2c2c2c;
    border-radius:4px;
    box-shadow:0 2px 0 #686868, inset 0 2px 0 #8a8a8a;
}
.select > *{
    grid-area:1/1;
}
.select > svg{
    justify-self: end;
    margin-right:8px;
    color:#e4e4e4;
    pointer-events:none;
}
.select select{
    appearance:none;
    width:100%;
    height:100%;
    padding:0 16px;
    background:none;
    border:none;
    opacity:1;
}
.style-select{
    width:162px;
}
.workspace-select{
    width:212px;
    margin-left:auto;
}
.workspace-select select{
    padding-left:14px;
}
.width-field{
    margin-left:26px;
}
.swap{
    margin:0 36px 0 32px;
}
.refine{
    width:172px;
    height:38px;
    color:#a6a6a6;
    background:linear-gradient(#666,#5b5b5b);
    border:2px solid #404040;
    border-radius:4px;
    box-shadow:0 2px 0 #5e5e5e, inset 0 2px 0 #707070;
}

/* workspace */
.workspace{
    flex:1;
    min-height:0;
    display:flex;
    padding:2px 2px 2px;
    background:#262626;
}
.toolbox{
    width:74px;
    display:flex;
    flex-direction: column;
    background:#535353;
    margin-bottom:-2px;
}
.collapse{
    height:24px;
    justify-content: flex-start;
    padding-left:8px;
    background:#383838;
    border-top:2px solid #444;
    border-bottom:2px solid #262626;
}
.grip-h{
    width:38px;
    height:8px;
    margin:8px auto 0;
    flex:none;
    background:repeating-linear-gradient(90deg,#2e2e2e 0 2px,#535353 2px 4px);
}
.tools{
    padding:15px 6px 0;
}
.tools hr{
    height:2px;
    margin:2px 2px;
    border:none;
    background:#3a3a3a;
}
.tools button{
    position:relative;
    width:62px;
    height:46px;
    margin:3px 0 6px;
}
.tools button + hr{
    margin-top:-1px;
    margin-bottom:5px;
}
.tools svg{
    width:62px;
    height:46px;
    filter:drop-shadow(0 -2px 0 #383838);
}
.tools .on{
    background:#383838;
    border-radius:4px;
    box-shadow:inset 0 0 0 2px #2b2b2b, 0 2px 0 #666;
}
.tools button::after{
    content:"";
    position:absolute;
    right:8px;
    bottom:3px;
    border:3px solid transparent;
    border-right-color:#e0e0e0;
    border-bottom-color:#e0e0e0;
}
.tools .solo::after{
    display:none;
}
.glyph{
    font-family:"Liberation Serif", serif;
    font-size:39px;
    text-anchor:middle;
    font-weight:700;
}
.glyph.small{
    font-size:31px;
}
.mini{
    display:flex;
    justify-content: space-between;
    padding:0 12px 0 6px;
}
.swatches, .color-swatches{
    display:grid;
    width:60px;
    height:60px;
    margin:10px 6px 0;
}
.swatches b, .color-swatches b{
    grid-area:1/1;
    width:40px;
    height:40px;
    border:2px solid #2c2c2c;
}
.swatches .fg, .color-swatches .fg{
    background:#fff;
}
.swatches .bg, .color-swatches .bg{
    align-self: end;
    justify-self: end;
    background:#000;
    box-shadow:inset 0 0 0 2px #fff;
}
.center{
    flex:1;
    min-width:0;
    display:flex;
    flex-direction: column;
    margin-left:2px;
    margin-right:2px;
    border-left:2px solid #383838;
    border-right:2px solid #383838;
}
.canvas{
    flex:1;
    margin-left:2px;
    background:#262626;
    border-bottom:2px solid #2a2a2a;
}
.timeline{
    display:flex;
    height:42px;
    padding-left:2px;
    border-top:4px solid #303030;
    border-bottom:2px solid #6a6a6a;
    background:linear-gradient(#404040,#363636);
}
.stub{
    width:28px;
    background:#535353;
    border-right:2px solid #262626;
}
.tl-tab{
    width:100px;
    color:#9a9a9a;
    border-right:2px solid #262626;
}
.menu-btn{
    margin-left:auto;
    margin-right:8px;
}

/* dock */
.dock{
    width:560px;
    flex:none;
    display:flex;
    flex-direction: column;
    margin-left:2px;
}
.dock-head{
    flex:none;
    height:24px;
    display:flex;
    justify-content: space-between;
    padding:0 7px 0 51px;
    background:#383838;
    border-top:2px solid #444;
    border-bottom:2px solid #262626;
}
.dock-body{
    flex:1;
    min-height:0;
    display:flex;
    gap:6px;
    background:linear-gradient(90deg,#262626 76px,#383838 76px 78px,#262626 78px);
}
.strip{
    width:74px;
    background:#535353;
}
.strip-cell{
    height:82px;
    border-top:2px solid #6a6a6a;
    border-bottom:2px solid #2c2c2c;
}
.strip-cell .grip-h{
    display:block;
    margin-top:6px;
}
.strip-cell button{
    margin:12px auto 0;
    padding-left:3px;
    filter:drop-shadow(0 -2px 0 #3a3a3a);
}
.panels{
    flex:1;
    display:flex;
    flex-direction: column;
}
.panel{
    flex:none;
    height:264px;
    background:#535353;
    border-bottom:2px solid #262626;
    box-shadow:inset 0 -2px 0 #383838, inset 0 -4px 0 #262626;
}
.tabs{
    display:flex;
    height:36px;
}
.tabs button{
    width:79px;
    padding-bottom:2px;
    color:#989898;
    border-right:2px solid #262626;
}
.tabs button, .fill{
    background:linear-gradient(#424242,#363636);
    border-bottom:2px solid #6a6a6a;
    box-shadow:inset 0 -2px 0 #262626;
}
.tabs .on{
    padding-bottom:4px;
    color:#f0f0f0;
    background:#535353;
    border-bottom:none;
    box-shadow:inset 0 2px 0 #6a6a6a;
}
.fill{
    flex:1;
    display:flex;
    align-items: center;
    justify-content: flex-end;
    padding-right:8px;
}
.color-body{
    display:flex;
    padding:14px 8px 0 9px;
}
.color-swatches{
    width:62px;
    height:62px;
    margin:4px 14px 0 0;
}
.color-swatches .fg{
    width:42px;
    height:44px;
    outline:2px solid #8a8a8a;
    outline-offset:-1px;
}
.channels{
    display:grid;
    grid-template-columns: 23px 180px 102px;
    grid-auto-rows: 50px;
    column-gap:1px;
    align-items: center;
    font-size:22px;
}
.channels label{
    margin-bottom:8px;
}
.channels .box{
    width:102px;
}
.slider{
    appearance:none;
    width:180px;
    height:32px;
    background:linear-gradient(90deg,var(--tint),#fff) 11px 3px / 158px 8px no-repeat, linear-gradient(#8c8c8c,#8c8c8c) 9px 1px / 162px 12px no-repeat;
}
.cyan{
    --tint:#0ff;
}
.magenta{
    --tint:#f0f;
}
.yellow{
    --tint:#ff0;
}
.slider::-webkit-slider-runnable-track{
    height:32px;
}
.slider::-webkit-slider-thumb{
    appearance:none;
    width:20px;
    height:19px;
    margin-top:13px;
    background:linear-gradient(#bbb,#848484);
    border-bottom:2px solid #333;
    clip-path:polygon(50% 0,100% 55%,100% 100%,0 100%,0 55%);
}
.spectrum{
    display:flex;
    width:400px;
    height:34px;
    margin:16px 0 0 12px;
    border:2px solid #333;
    border-bottom-color:#6a6a6a;
}
.spectrum i{
    flex:1;
    background:linear-gradient(rgba(255,255,255,.9),rgba(255,255,255,0) 50%,rgba(0,0,0,0) 55%,rgba(0,0,0,.8)),
        linear-gradient(90deg,#e60012,#fff100 17%,#009944 31%,#00a0e9 50%,#1d2088 67%,#e4007f 83%,#e60012);
}
.spectrum b{
    width:16px;
    background:linear-gradient(#fff 48%,#000 48%);
}
.hint{
    margin:8px 18px 0;
    font-size:24px;
    font-weight:400;
}
.adjust{
    width:420px;
    padding-top:8px;
    filter:drop-shadow(0 -2px 0 #454545);
}
.adjust div{
    display:flex;
    justify-content: center;
    height:54px;
}
.adjust button{
    width:48px;
}
.layers{
    flex:1;
    height:auto;
    min-height:0;
    display:flex;
    flex-direction: column;
    border:none;
    box-shadow:none;
    color:#a2a2a2;
}
.row{
    flex:none;
    height:56px;
    display:flex;
    align-items: center;
    padding:0 8px 4px;
    border-bottom:2px solid #6a6a6a;
    box-shadow:inset 0 -2px 0 #333;
}
.row.last{
    height:58px;
    padding-left:14px;
    padding-bottom:6px;
    border-bottom:2px solid #363636;
    box-shadow:none;
}
.select.dimmed{
    background:linear-gradient(#646464,#595959);
    border-color:#404040;
    box-shadow:0 2px 0 #5e5e5e, inset 0 2px 0 #707070;
}
.select.dimmed > svg{
    color:#a8a8a8;
}
.kind{
    width:142px;
}
.kind select{
    padding-left:42px;
}
.select .lens{
    justify-self: start;
    margin-left:12px;
}
.blend{
    width:222px;
}
.filters{
    display:flex;
    margin-left:31px;
    filter:drop-shadow(0 -2px 0 #404040);
}
.filters button{
    width:48px;
}
.toggle{
    width:18px;
    height:34px;
    margin-left:auto;
    background:linear-gradient(#777,#555 14px,#383838 14px 16px,#4a4a4a 16px);
    border:2px solid #3c3c3c;
}
.amount{
    display:flex;
    align-items: center;
    gap:12px;
    margin-left:auto;
}
.combo{
    display:flex;
    width:112px;
    height:40px;
    border:2px solid #404040;
    border-radius:0 4px 4px 0;
    box-shadow:0 2px 0 #5e5e5e;
}
.combo input{
    width:70px;
    padding:0;
    border:none;
    background:#4a4a4a;
}
.combo button{
    flex:1;
    background:linear-gradient(#646464,#595959);
    box-shadow:inset 0 2px 0 #707070;
}
.locks{
    display:flex;
    gap:18px;
    margin-left:20px;
    filter:drop-shadow(0 -2px 0 #404040);
}
.layer-list{
    flex:1;
    background:linear-gradient(90deg,#3a3a3a,#444 15px,#3e3e3e) right / 30px 100% no-repeat #464646;
}
.layer-actions{
    flex:none;
    height:40px;
    display:flex;
    justify-content: flex-end;
    padding-right:42px;
    border-top:4px solid #333;
    box-shadow:inset 0 2px 0 #6a6a6a;
}
.layer-actions button{
    width:54px;
    padding-top:2px;
}
.layer-actions em{
    color:#8a8a8a;
    font-family:"Liberation Serif", serif;
    font-size:30px;
}

/* taskbar */
.taskbar{
    position:relative;
    flex:none;
    height:96px;
    display:flex;
    align-items: center;
    justify-content: center;
    color:#111;
    border-top:2px solid rgba(0,0,0,.08);
    background:linear-gradient(92deg,#e8d7d7,#e8d5d5 21%,#dddede 24%,#dfe1e4 31%,#dddddd 37%,#e1e4e8 52%,#e1e4e8 70%,#dfdfe1 85%,#ececec);
}
.apps{
    display:flex;
}
.apps button{
    position:relative;
    width:78px;
    height:78px;
    margin:0 5px;
    border-radius:8px;
}
.open::after, .active::after{
    content:"";
    position:absolute;
    bottom:2px;
    width:12px;
    height:6px;
    border-radius:3px;
    background:#808080;
}
.apps .active{
    background:#f1f2f3;
    box-shadow:0 0 0 1px #d6d8da, 0 2px 0 #cfd0d2;
}
.active::after{
    width:32px;
    background:#0078d7;
}
.ps{
    width:46px;
    height:44px;
    border:3px solid #7ab8f5;
    background:#2a2266;
    color:#8bc0fb;
    font-size:25px;
    font-weight:600;
    line-height:36px;
}
.widgets{
    position:absolute;
    left:32px;
}
.tray{
    position:absolute;
    right:39px;
    display:flex;
    align-items: center;
}
.ime{
    margin:0 35px 0 28px;
}
.status{
    gap:15px;
}
.clock{
    flex-direction: column;
    align-items: flex-end;
    margin:0 20px 2px 28px;
    font-size:23px;
}
```
